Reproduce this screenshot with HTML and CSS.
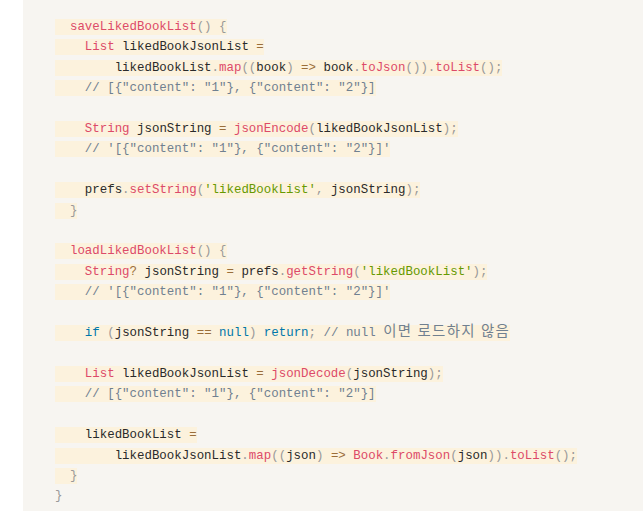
FILE: index.html
```html
<!DOCTYPE html>
<html lang="ko">
<head>
<meta charset="utf-8">
<title>Code</title>
<link rel="stylesheet" href="styles.css">
</head>
<body>
<div class="page">
<pre class="code"><code><span class="ln">  <span class="fn">saveLikedBookList</span><span class="p">()</span> <span class="p">{</span></span>
<span class="ln">    <span class="cls">List</span> likedBookJsonList <span class="op">=</span></span>
<span class="ln">        likedBookList<span class="p">.</span><span class="fn">map</span><span class="p">((</span>book<span class="p">)</span> <span class="op">=&gt;</span> book<span class="p">.</span><span class="fn">toJson</span><span class="p">()).</span><span class="fn">toList</span><span class="p">();</span></span>
<span class="ln">    <span class="cm">// [{"content": "1"}, {"content": "2"}]</span></span>

<span class="ln">    <span class="cls">String</span> jsonString <span class="op">=</span> <span class="fn">jsonEncode</span><span class="p">(</span>likedBookJsonList<span class="p">);</span></span>
<span class="ln">    <span class="cm">// '[{"content": "1"}, {"content": "2"}]'</span></span>

<span class="ln">    prefs<span class="p">.</span><span class="fn">setString</span><span class="p">(</span><span class="str">'likedBookList'</span><span class="p">,</span> jsonString<span class="p">);</span></span>
<span class="ln">  <span class="p">}</span></span>

<span class="ln">  <span class="fn">loadLikedBookList</span><span class="p">()</span> <span class="p">{</span></span>
<span class="ln">    <span class="cls">String</span><span class="op">?</span> jsonString <span class="op">=</span> prefs<span class="p">.</span><span class="fn">getString</span><span class="p">(</span><span class="str">'likedBookList'</span><span class="p">);</span></span>
<span class="ln">    <span class="cm">// '[{"content": "1"}, {"content": "2"}]'</span></span>

<span class="ln">    <span class="kw">if</span> <span class="p">(</span>jsonString <span class="op">==</span> <span class="kw">null</span><span class="p">)</span> <span class="kw">return</span><span class="p">;</span> <span class="cm">// null <span class="ko">이면 로드하지 않음</span></span></span>

<span class="ln">    <span class="cls">List</span> likedBookJsonList <span class="op">=</span> <span class="fn">jsonDecode</span><span class="p">(</span>jsonString<span class="p">);</span></span>
<span class="ln">    <span class="cm">// [{"content": "1"}, {"content": "2"}]</span></span>

<span class="ln">    likedBookList <span class="op">=</span></span>
<span class="ln">        likedBookJsonList<span class="p">.</span><span class="fn">map</span><span class="p">((</span>json<span class="p">)</span> <span class="op">=&gt;</span> <span class="cls">Book</span><span class="p">.</span><span class="fn">fromJson</span><span class="p">(</span>json<span class="p">)).</span><span class="fn">toList</span><span class="p">();</span></span>
<span class="ln">  <span class="p">}</span></span>
<span class="p">}</span></code></pre>
</div>
</body>
</html>
```
FILE: styles.css
```css
html, body {
  margin: 0;
  padding: 0;
  background: #ffffff;
  overflow: hidden;
}

.page {
  padding-left: 23px;
}

.code {
  margin: 0;
  padding: 17px 32px 40px;
  background: #f7f5f1;
  font-family: "Liberation Mono", "Noto Sans CJK KR", monospace;
  font-size: 12.43px;
  line-height: 20.4px;
  color: #2a2a2a;
  white-space: pre;
  tab-size: 4;
}

.code code {
  font: inherit;
}

.ln {
  background: #fcf2dd;
  padding: 1px 0;
}

.fn,
.cls {
  color: #dd4a68;
}

.p {
  color: #999999;
}

.op {
  color: #9a6e3a;
}

.cm {
  color: #708090;
}

.str {
  color: #669900;
}

.kw {
  color: #0077aa;
}

.ko {
  font-family: "Noto Sans CJK KR", sans-serif;
  font-size: 14.4px;
  line-height: 1;
  letter-spacing: 1.3px;
}
```
